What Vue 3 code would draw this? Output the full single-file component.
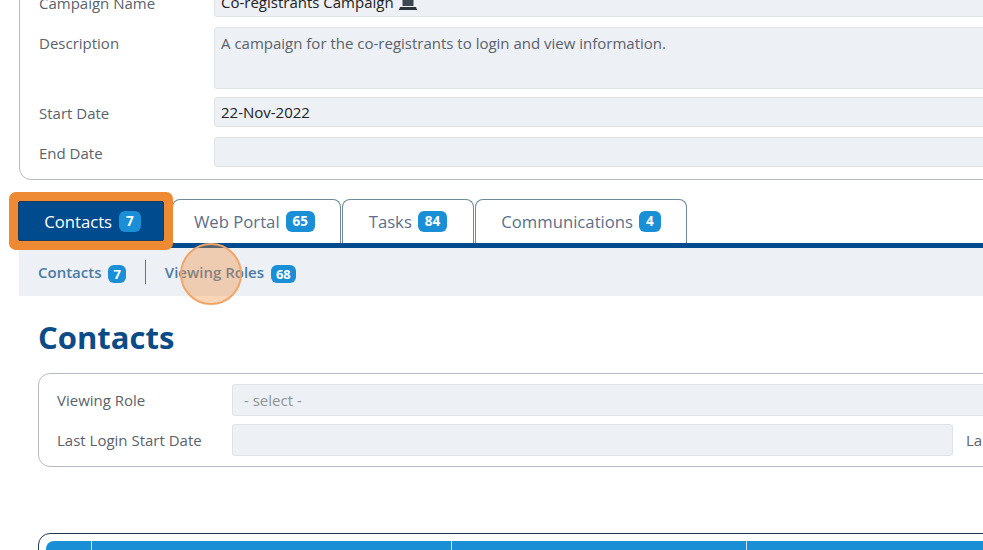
<template>
  <div class="viewport">
    <div class="page">
      <section class="card details">
        <div v-for="field in fields" :key="field.label" class="field">
          <label class="label">{{ field.label }}</label>
          <div :class="['input', field.cls]">
            {{ field.value }}
            <svg v-if="field.icon" class="laptop" viewBox="0 0 18 16" width="18" height="16">
              <path d="M3.5 1h11v10h-11z" fill="#3c4650" />
              <path d="M1 12h16l1 3H0z" fill="#2b3138" />
            </svg>
          </div>
        </div>
      </section>

      <nav class="tabs">
        <a v-for="tab in tabs" :key="tab.name" :class="['tab', { active: tab.active }]">
          {{ tab.name }} <span class="badge">{{ tab.count }}</span>
        </a>
      </nav>

      <div class="subnav">
        <a class="sublink first">Contacts <span class="badge small">7</span></a>
        <a class="sublink second">
          Viewing Roles <span class="badge small">68</span>
          <span class="click-ring"></span>
        </a>
      </div>

      <div class="content">
        <h1 class="title">Contacts</h1>

        <section class="card filters">
          <label class="label">Viewing Role</label>
          <div class="input select wide">- select -</div>
          <label class="label">Last Login Start Date</label>
          <div class="input"></div>
          <label class="label">Last Login End Date</label>
          <div class="input"></div>
        </section>

        <section class="grid-card">
          <div class="grid-head">
            <div class="col c1"></div>
            <div class="col c2"></div>
            <div class="col c3"></div>
            <div class="col c4"></div>
          </div>
        </section>
      </div>
    </div>
  </div>
</template>

<script setup>
const fields = [
  { label: 'Campaign Name', value: 'Co-registrants Campaign', cls: 'name', icon: true },
  { label: 'Description', value: 'A campaign for the co-registrants to login and view information.', cls: 'desc' },
  { label: 'Start Date', value: '22-Nov-2022', cls: 'date' },
  { label: 'End Date', value: '', cls: '' }
]

const tabs = [
  { name: 'Contacts', count: 7, active: true },
  { name: 'Web Portal', count: 65 },
  { name: 'Tasks', count: 84 },
  { name: 'Communications', count: 4 }
]
</script>

<style>
body {
  margin: 0;
  background: #fff;
  overflow: hidden;
}
</style>

<style scoped>
.viewport {
  width: 983px;
  height: 550px;
  overflow: hidden;
  font-family: "Open Sans", "Liberation Sans", sans-serif;
  font-size: 15px;
  color: #5a626b;
}

.page {
  width: 1400px;
  margin-top: -31px;
  padding-left: 19px;
  box-sizing: border-box;
}

.card {
  border: 1px solid #b5bcc2;
  border-radius: 12px;
  background: #fff;
}

.details {
  display: flex;
  flex-direction: column;
  gap: 10px;
  padding: 11px 0 12px 19px;
}

.field {
  display: flex;
}

.field:nth-child(2) {
  margin-bottom: -2px;
}

.label {
  display: block;
  line-height: 28px;
  flex: none;
  white-space: nowrap;
}

.details .label {
  width: 175px;
  padding-top: 2px;
}

.field:first-child .label {
  padding-top: 8px;
}

.input {
  box-sizing: border-box;
  height: 30px;
  flex: 1;
  padding: 0 6px;
  line-height: 28px;
  background: #edf0f5;
  border: 1px solid #dfe3e8;
  border-radius: 3px;
  color: #222;
}

.input.name {
  height: 36px;
  padding-top: 6px;
}

.input.desc {
  height: 62px;
  padding-top: 1px;
  color: #5a626b;
}

.laptop {
  vertical-align: -3px;
  margin-left: 1px;
}

.tabs {
  display: flex;
  gap: 1px;
  margin-top: 19px;
  height: 44px;
  border-bottom: 5px solid #004b8d;
}

.tab {
  box-sizing: border-box;
  display: flex;
  align-items: center;
  justify-content: center;
  gap: 6px;
  height: 44px;
  font-size: 16.7px;
  color: #5b6f8a;
  background: #fff;
  border: 1px solid #6d8a98;
  border-bottom: 0;
  border-radius: 8px 8px 0 0;
}

.tab.active {
  position: relative;
  z-index: 2;
  gap: 7px;
  width: 146px;
  height: 40px;
  margin: 2px 7px 0 -1px;
  padding-left: 3px;
  color: #fff;
  background: #004b8d;
  border: 1px solid #1c3a5c;
  border-radius: 2px;
  box-shadow: 0 0 0 9px #ee8a34;
}

.tab:nth-child(2) {
  width: 169px;
  padding-right: 4px;
}

.tab:nth-child(3) {
  width: 132px;
}

.tab:nth-child(4) {
  width: 212px;
}

.badge {
  display: inline-block;
  box-sizing: border-box;
  padding: 0 7px;
  height: 21px;
  line-height: 21px;
  border-radius: 6px;
  background: #1a8fd6;
  color: #fff;
  font-size: 13.5px;
  font-weight: 700;
  text-align: center;
}

.badge.small {
  margin-left: 3px;
  padding: 0 5px;
  height: 18px;
  line-height: 18px;
  font-size: 13px;
  vertical-align: -1px;
}

.subnav {
  display: flex;
  align-items: center;
  height: 48px;
  padding-left: 19px;
  background: #edf0f5;
}

.sublink {
  font-weight: 600;
  font-size: 15px;
  color: #4a7ba6;
}

.sublink.first {
  padding-right: 19px;
  margin-right: 19px;
  line-height: 24px;
  border-right: 1px solid #4a7ba6;
}

.sublink.second {
  position: relative;
}

.click-ring {
  position: absolute;
  left: 15px;
  top: -19px;
  width: 62px;
  height: 62px;
  box-sizing: border-box;
  border: 2px solid #f2a566;
  border-radius: 50%;
  background: rgba(240, 140, 60, 0.36);
}

.content {
  padding-left: 19px;
}

.title {
  margin: 22px 0 17px;
  font-size: 31px;
  line-height: 38px;
  font-weight: 700;
  color: #0b4c86;
}

.filters {
  display: grid;
  grid-template-columns: 162px 721px 150px 1fr;
  grid-template-rows: 32px 32px;
  column-gap: 13px;
  row-gap: 8px;
  box-sizing: border-box;
  height: 94px;
  padding: 10px 0 0 18px;
}

.filters .label {
  line-height: 32px;
}

.filters .input {
  height: 32px;
}

.filters .wide {
  grid-column: 2 / -1;
}

.filters .select {
  color: #8d949b;
  padding-left: 11px;
  line-height: 31px;
}

.grid-card {
  margin-top: 66px;
  height: 60px;
  padding: 7px 0 0 7px;
  border: 1px solid #1c3a4c;
  border-radius: 12px;
}

.grid-head {
  display: flex;
  height: 50px;
  background: #1a8fd6;
  border-radius: 8px 0 0 0;
}

.col {
  box-sizing: border-box;
  border-right: 1px solid #cfe6f5;
}

.c1 { width: 46px; }
.c2 { width: 360px; }
.c3 { width: 295px; }
.c4 { flex: 1; border-right: 0; }
</style>
